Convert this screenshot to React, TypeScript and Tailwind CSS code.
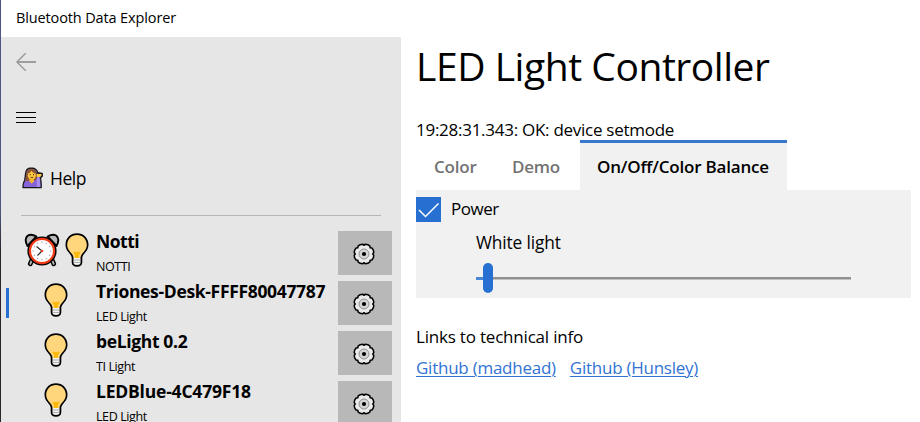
import React from "react";

function Bulb() {
  return (
    <svg width="24" height="34" viewBox="0 0 24 34" className="shrink-0">
      <path
        d="M12 .2C5.500.2.5 5 .5 11.600c0 4.900 2.800 7.400 5 10.200.9 1.300 1.200 2 1.200 3.500v4c0 2.800 1.900 4.500 5.300 4.500s5.300-1.700 5.300-4.500v-4c0-1.500.3-2.200 1.200-3.500 2.200-2.800 5-5.300 5-10.200C23.500 5 18.500.2 12 .2z"
        fill="#000"
      />
      <path
        d="M12 1.900C6.500 1.900 2.200 6.100 2.200 11.700c0 4.300 2.500 6.500 4.800 9.400.9 1.200 1.300 2.200 1.500 3.900h7c.2-1.700.6-2.700 1.500-3.900 2.300-2.900 4.800-5.100 4.800-9.400C21.800 6.100 17.500 1.900 12 1.900z"
        fill="#ffd67b"
      />
      <path d="M8.800 18.300l2 1 1.200-.6 1.200.6 2-1v2.400l-1.200 1V25h-4v-3.300l-1.200-1z" fill="#fcb90c" />
      <path d="M8.500 25h7v4.500c0 1.800-1.500 2.500-3.500 2.500s-3.500-.7-3.500-2.500z" fill="#f4f4f4" />
      <path d="M8.500 27h7M8.500 29.500h7" stroke="#9a9a9a" strokeWidth="0.800" />
    </svg>
  );
}

const ticks = [0, 30, 60, 90, 120, 150, 180, 210, 240, 270, 300, 330];

function AlarmClock() {
  return (
    <svg width="36" height="34" viewBox="0 0 36 34" className="shrink-0">
      <path d="M8 27l-1.700 3.800M28 27l1.700 3.800" stroke="#000" strokeWidth="4.800" strokeLinecap="round" />
      <path d="M8 27l-1.700 3.800M28 27l1.700 3.800" stroke="#b5b5b5" strokeWidth="1.900" strokeLinecap="round" />
      <path
        d="M3.500 13C1.300 9 1.300 4.800 3.600 2.700c2.400-1.500 6-1 8.800.8zM32.500 13c2.200-4 2.200-8.200-.1-10.300-2.400-1.500-6-1-8.800.8z"
        fill="#b9b9b9"
        stroke="#000"
        strokeWidth="1.900"
        strokeLinejoin="round"
      />
      <circle cx="18" cy="18" r="14.600" fill="#000" />
      <circle cx="18" cy="18" r="12.100" fill="#fff" stroke="#f03a17" strokeWidth="2.300" />
      {ticks.map((a) => (
        <circle key={a} cx="18" cy="9.200" r="0.750" fill="#aaa" transform={`rotate(${a} 18 18)`} />
      ))}
      <path d="M12.600 13.500L18 18l-4.500 4.500" fill="none" stroke="#222" strokeWidth="1.100" />
      <circle cx="18" cy="18" r="1.300" fill="#e83a1c" />
    </svg>
  );
}

const lobes = [0, 45, 90, 135, 180, 225, 270, 315];

const point = (r: number, deg: number) => {
  const t = (deg * Math.PI) / 180;
  return `${(11 + r * Math.cos(t)).toFixed(2)} ${(11 + r * Math.sin(t)).toFixed(2)}`;
};

const gearOutline =
  "M" + lobes.map((a) => [point(8.7, a), point(9.900, a + 8), point(10.100, a + 22.500), point(9.900, a + 37)].join("L")).join("L") + "Z";

function Gear() {
  return (
    <svg width="22" height="22" viewBox="0 0 22 22">
      <path d={gearOutline} fill="#ebebeb" stroke="#000" strokeWidth="1.500" strokeLinejoin="round" />
      <circle cx="11" cy="11" r="5" fill="#d4d4d4" stroke="#909090" strokeWidth="1" />
      <circle cx="11" cy="11" r="2.100" fill="#000" />
    </svg>
  );
}

function HelpPerson() {
  return (
    <svg width="22" height="22" viewBox="0 0 22 22" className="shrink-0">
      <path
        d="M9 1C5.200 1 3.600 4 3.400 7.600 3.300 10 2.600 12 2.800 13.500 1.300 15 1 17 1 20.700h18.200v-3.200c0-2-.3-4.300-.7-6.700l1.700-1.600V6.500l-4.400-.9C14.800 2.900 12.700 1 9 1z"
        fill="#8663d9"
        stroke="#1a1a1a"
        strokeWidth="1.300"
        strokeLinejoin="round"
      />
      <path d="M9 1.700C5.600 1.700 4.200 4.500 4.100 7.800 4 10.600 3 13 3.900 14.300l10.500-1.200c.9-1.400.8-4.600.5-6.400C14.400 3.700 12.400 1.700 9 1.700z" fill="#8b5436" />
      <ellipse cx="9.800" cy="8.200" rx="4" ry="4.600" fill="#ffc83d" />
      <path d="M7.500 11.500h4.400v2.700l-2.200 2.500-2.200-2.500z" fill="#f7b52c" />
      <path d="M5.500 6.500C7.600 6.300 8.800 5 9.500 3.400c.8 1.700 2 2.700 4.300 3.100L12.600 3 9.500 2 6.500 3z" fill="#8b5436" />
      <path d="M14.700 6.600l4.800.5v1.600l-2.200 1.500-2.600-.5z" fill="#ffc83d" />
      <path d="M14.800 10.500l2.800-.2.700 9.700h-3.500z" fill="#a88cf0" />
      <path d="M8.200 7v1.300M11.500 7v1.300M8.500 10.200q1.300.8 2.600 0" fill="none" stroke="#3b2416" strokeWidth="0.900" />
      <path d="M14.300 6.200l5.900.4v2.600l-2.500 1.700" fill="none" stroke="#1a1a1a" strokeWidth="1" />
    </svg>
  );
}

type Device = { name: string; kind: string; tracking: string; clock?: boolean; selected?: boolean };

const devices: Device[] = [
  { name: "Notti", kind: "NOTTI", tracking: "tracking-[-0.5px]", clock: true },
  { name: "Triones-Desk-FFFF80047787", kind: "LED Light", tracking: "tracking-[-0.33px]", selected: true },
  { name: "beLight 0.2", kind: "TI Light", tracking: "tracking-[-0.35px]" },
  { name: "LEDBlue-4C479F18", kind: "LED Light", tracking: "tracking-[-0.2px]" },
];

function DeviceRow({ d }: { d: Device }) {
  return (
    <li className="flex h-[50px] shrink-0">
      <div className="flex w-[95px] shrink-0">
        <div className="w-[8px] pl-[5px] pt-[10px]">
          {d.selected && <div className="h-[30px] w-[3px] bg-[#276fd0]" />}
        </div>
        <div className={d.clock ? "flex gap-[5px] pl-[15px] pt-[5px]" : "flex pl-[35px] pt-[5px]"}>
          {d.clock && <AlarmClock />}
          <Bulb />
        </div>
      </div>
      <div className="w-[242px] whitespace-nowrap">
        <div className={`h-[27px] text-[17.500px] font-bold leading-[26px] ${d.tracking}`}>{d.name}</div>
        <div className="h-[23px] text-[12.500px] leading-[24px] tracking-[-0.4px]">{d.kind}</div>
      </div>
      <button className="mt-[3px] flex h-[44px] w-[54px] items-center justify-center bg-[#b8b8b8] pr-[2px] pt-[2px]">
        <Gear />
      </button>
    </li>
  );
}

export default function App() {
  return (
    <div className="flex h-[422px] w-[920px] overflow-hidden bg-white font-['Open_Sans','Noto_Sans',sans-serif] text-black">
      <div className="w-px shrink-0 bg-linear-to-b from-[#4c5680] from-50% to-[#2b2428] to-60%" />
      <div className="flex min-w-0 flex-1 flex-col">
        <header className="h-[37px] shrink-0 pl-[15px] text-[14.500px] leading-[35px] tracking-[-0.13px]">Bluetooth Data Explorer</header>
        <div className="flex min-h-0 flex-1">
          <aside className="flex w-[400px] shrink-0 flex-col overflow-hidden bg-[#e6e6e6]">
            <div className="pl-[15px] pt-[15px]">
              <svg width="20" height="20" viewBox="0 0 20 20" fill="none" stroke="#969696">
                <path d="M1 10h19" strokeWidth="1.800" />
                <path d="M9.700 1.200L.9 10l8.800 8.800" strokeWidth="1.300" />
              </svg>
            </div>
            <div className="mt-[40px] flex flex-col gap-[4px] pl-[15px]">
              <div className="h-px w-[20px] bg-black" />
              <div className="h-px w-[20px] bg-black" />
              <div className="h-px w-[20px] bg-black" />
            </div>
            <div className="mt-[42px] flex h-[26px] items-center pl-[21px] text-[17.500px] leading-[26px] tracking-[-0.5px]">
              <HelpPerson />
              <span className="ml-[6px]">Help</span>
            </div>
            <div className="ml-[20px] mt-[24px] h-px w-[360px] shrink-0 bg-[#b5b5b5]" />
            <ul className="mt-[12px] flex flex-col">
              {devices.map((d) => (
                <DeviceRow key={d.name} d={d} />
              ))}
            </ul>
          </aside>
          <main className="flex flex-1 flex-col pl-[15px]">
            <h1 className="h-[60px] text-[39px] leading-[58px] tracking-[-0.45px]">LED Light Controller</h1>
            <p className="mt-[20px] h-[23px] text-[17px] leading-[25px] tracking-[-0.27px]">19:28:31.343: OK: device setmode</p>
            <nav className="flex h-[50px] items-stretch text-[17px] font-semibold leading-[48px] tracking-[-0.2px] text-[#737373]">
              <div className="w-[78px] pl-[18px] pt-[3px]">Color</div>
              <div className="w-[86px] pl-[18px] pt-[3px]">Demo</div>
              <div className="w-[207px] whitespace-nowrap border-t-[3px] border-[#3878cc] bg-[#f1f1f1] pl-[17px] text-black">On/Off/Color Balance</div>
            </nav>
            <section className="h-[108px] w-[495px] bg-[#f1f1f1] pt-[7px]">
              <div className="flex h-[25px] items-start">
                <div className="h-[25px] w-[25px] bg-[#276fd0]">
                  <svg width="25" height="25" viewBox="0 0 25 25" fill="none" stroke="#fff" strokeWidth="1.500">
                    <path d="M3 13l6.500 6.500L22.500 6.500" />
                  </svg>
                </div>
                <span className="ml-[10px] text-[17px] leading-[23px] tracking-[-0.5px]">Power</span>
              </div>
              <div className="ml-[60px] mt-[8px] h-[26px] text-[17.300px] leading-[26px] tracking-[-0.13px]">White light</div>
              <div className="ml-[60px] mt-[7px] flex h-[30px] w-[375px] items-center">
                <div className="h-[3px] w-[7px] bg-[#4a85d6]" />
                <div className="h-[30px] w-[10px] rounded-full bg-[#276fd0]" />
                <div className="h-[3px] flex-1 border-b border-[#c0c0c0] bg-[#919191]" />
              </div>
            </section>
            <p className="mt-[26px] h-[26px] text-[17px] leading-[26px] tracking-[-0.2px]">Links to technical info</p>
            <div className="mt-[5px] flex gap-[14px] text-[17px] leading-[26px] tracking-[-0.25px] text-[#3173d3]">
              <a className="underline decoration-1 underline-offset-2">Github (madhead)</a>
              <a className="underline decoration-1 underline-offset-2">Github (Hunsley)</a>
            </div>
          </main>
        </div>
      </div>
    </div>
  );
}
